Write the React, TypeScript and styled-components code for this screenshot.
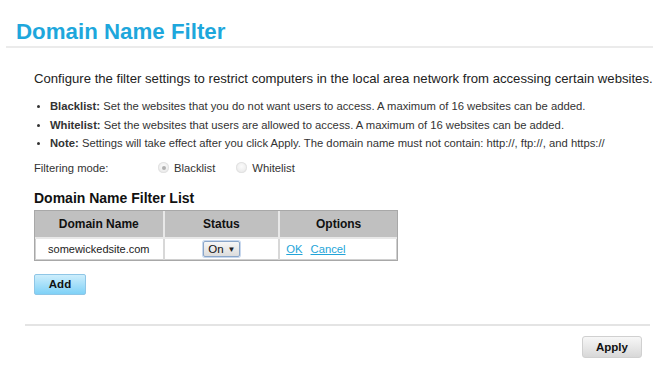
import React from "react";
import styled, { createGlobalStyle } from "styled-components";

const Global = createGlobalStyle`
  html, body { margin: 0; padding: 0; background: #fff; }
  body { font-family: "Liberation Sans", Arial, sans-serif; color: #222; }
`;

const Page = styled.div`
  width: 653px;
  height: 368px;
  overflow: hidden;
  background: #fff;
`;

const Header = styled.div`
  margin: 0 0 0 6px;
  padding: 19px 0 1px 10px;
  border-bottom: 2px solid #ebebeb;
`;

const Title = styled.h1`
  margin: 0;
  font-size: 22.3px;
  line-height: 26px;
  font-weight: bold;
  color: #1ea7dc;
`;

const Body = styled.div`
  margin: 0 3px 0 25px;
  padding: 22px 0 0 9px;
  border-bottom: 2px solid #e4e4e4;
  height: 278px;
  box-sizing: border-box;
`;

const Intro = styled.p`
  margin: 0 0 9px 0;
  font-size: 13.15px;
  line-height: 18px;
  white-space: nowrap;
  color: #222;
`;

const Bullets = styled.ul`
  margin: 0 0 6px 0;
  padding: 0 0 0 16px;
  font-size: 11.25px;
  line-height: 18.5px;
  white-space: nowrap;
  color: #333;
  li::marker { font-size: 10px; }
`;

const ModeRow = styled.div`
  display: flex;
  align-items: center;
  font-size: 11.25px;
  color: #333;
  height: 18px;
`;

const ModeLabel = styled.span`
  width: 124px;
`;

const RadioOption = styled.label`
  display: inline-flex;
  align-items: center;
  margin-right: 21px;
  color: #333;
`;

const RadioDot = styled.span<{ $checked?: boolean }>`
  width: 11px;
  height: 11px;
  border-radius: 50%;
  margin-right: 5px;
  background: radial-gradient(circle at 50% 40%, #fbfbfb 0%, #e4e4e4 100%);
  box-shadow: inset 0 0 0 1px #e2e2e2;
  position: relative;
  &::after {
    content: "";
    display: ${(p) => (p.$checked ? "block" : "none")};
    position: absolute;
    left: 3.5px;
    top: 3.5px;
    width: 4px;
    height: 4px;
    border-radius: 50%;
    background: #b0b0b0;
  }
`;

const ListTitle = styled.h2`
  margin: 13px 0 3px 0;
  font-size: 14px;
  line-height: 17px;
  font-weight: bold;
  color: #111;
`;

const Table = styled.table`
  border-collapse: separate;
  border-spacing: 0;
  width: 364px;
  border: 1px solid #a8a8a8;
  box-shadow: inset 0 0 0 1px #d0d0d0;
  font-size: 11px;
`;

const Th = styled.th<{ $w: number }>`
  width: ${(p) => p.$w}px;
  height: 26px;
  padding: 0;
  background: #c0c0c0;
  color: #111;
  font-weight: bold;
  font-size: 12px;
  border-right: 2px solid #e8e8e8;
  border-bottom: 2px solid #e8e8e8;
  &:last-child { border-right: none; }
`;

const Td = styled.td<{ $align?: string }>`
  height: 21px;
  padding: 0 6px;
  text-align: ${(p) => p.$align || "center"};
  color: #222;
  border-right: 2px solid #d8d8d8;
  &:last-child { border-right: none; }
`;

const SelectBox = styled.span`
  display: inline-flex;
  align-items: center;
  gap: 4px;
  height: 14px;
  padding: 0 3px 0 4px;
  border: 1px solid #8aa6c9;
  border-radius: 2px;
  background: linear-gradient(#f6f6f6, #dcdcdc);
  box-shadow: 0 0 0 1px #c8d8ee;
  font-size: 11.5px;
  color: #111;
`;

const Caret = styled.span`
  font-size: 8px;
  color: #222;
`;

const Link = styled.a`
  color: #23a4d8;
  text-decoration: underline;
  margin-right: 8px;
  font-size: 11.25px;
  cursor: pointer;
`;

const AddButton = styled.button`
  display: block;
  margin-top: 13px;
  width: 52px;
  height: 21px;
  border: 1px solid #8fc6e6;
  border-radius: 2px;
  background: linear-gradient(#cdeefc, #7fd1f7);
  font-family: "Liberation Sans", Arial, sans-serif;
  font-weight: bold;
  font-size: 11.5px;
  color: #111;
  padding: 0;
`;

const Footer = styled.div`
  display: flex;
  justify-content: flex-end;
  padding: 10px 11px 0 0;
`;

const ApplyButton = styled.button`
  width: 60px;
  height: 22px;
  border: 1px solid #d0d0d0;
  border-radius: 3px;
  background: linear-gradient(#f7f7f7, #d8d8d8);
  font-family: "Liberation Sans", Arial, sans-serif;
  font-weight: bold;
  font-size: 11.5px;
  color: #111;
  padding: 0;
`;

export default function App() {
  return (
    <Page>
      <Global />
      <Header>
        <Title>Domain Name Filter</Title>
      </Header>
      <Body>
        <Intro>
          Configure the filter settings to restrict computers in the local area network from accessing certain websites.
        </Intro>
        <Bullets>
          <li>
            <b>Blacklist:</b> Set the websites that you do not want users to access. A maximum of 16 websites can be added.
          </li>
          <li>
            <b>Whitelist:</b> Set the websites that users are allowed to access. A maximum of 16 websites can be added.
          </li>
          <li>
            <b>Note:</b> Settings will take effect after you click Apply. The domain name must not contain: http://, ftp://, and https://
          </li>
        </Bullets>
        <ModeRow>
          <ModeLabel>Filtering mode:</ModeLabel>
          <RadioOption>
            <RadioDot $checked />
            Blacklist
          </RadioOption>
          <RadioOption>
            <RadioDot />
            Whitelist
          </RadioOption>
        </ModeRow>
        <ListTitle>Domain Name Filter List</ListTitle>
        <Table>
          <thead>
            <tr>
              <Th $w={128}>Domain Name</Th>
              <Th $w={116}>Status</Th>
              <Th $w={118}>Options</Th>
            </tr>
          </thead>
          <tbody>
            <tr>
              <Td>somewickedsite.com</Td>
              <Td>
                <SelectBox>
                  On <Caret>▼</Caret>
                </SelectBox>
              </Td>
              <Td $align="left">
                <Link>OK</Link>
                <Link>Cancel</Link>
              </Td>
            </tr>
          </tbody>
        </Table>
        <AddButton>Add</AddButton>
      </Body>
      <Footer>
        <ApplyButton>Apply</ApplyButton>
      </Footer>
    </Page>
  );
}
